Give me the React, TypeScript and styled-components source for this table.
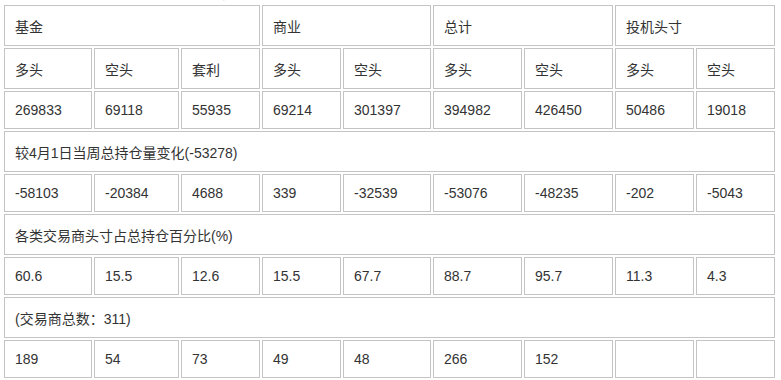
import React from 'react';
import styled, { createGlobalStyle } from 'styled-components';

const GlobalStyle = createGlobalStyle`
  body {
    margin: 0;
    background: #fff;
    font-family: "Liberation Sans", Arial, "Noto Sans CJK SC", sans-serif;
    color: #333;
  }
`;

const Page = styled.div`
  padding: 0 2px;
`;

// only the last pixels of the caption line are visible in the shot
const Caption = styled.p`
  margin: -17px 0 0;
  height: 20px;
  font-size: 14px;
  line-height: 20px;
  color: #333;
`;

const Grid = styled.div`
  display: grid;
  grid-template-columns: 88px 85px 79px 79px 88px 89px 89px 79px 79px;
  grid-template-rows: 41px 41px 38px 41px 38px 41px 38px 41px 38px;
  gap: 2px;
  padding: 2px;
  width: 775px;
  box-sizing: border-box;
`;

const Cell = styled.div<{ $span?: number }>`
  grid-column: span ${(p) => p.$span ?? 1};
  display: flex;
  align-items: center;
  padding: 0 10px;
  border: 1px solid #c4c4c4;
  font-size: 14px;
  white-space: nowrap;
  overflow: hidden;
`;

type CellData = { text: string; span?: number };

const rows: CellData[][] = [
  [
    { text: '基金', span: 3 },
    { text: '商业', span: 2 },
    { text: '总计', span: 2 },
    { text: '投机头寸', span: 2 },
  ],
  ['多头', '空头', '套利', '多头', '空头', '多头', '空头', '多头', '空头'].map((t) => ({ text: t })),
  ['269833', '69118', '55935', '69214', '301397', '394982', '426450', '50486', '19018'].map((t) => ({
    text: t,
  })),
  [{ text: '较4月1日当周总持仓量变化(-53278)', span: 9 }],
  ['-58103', '-20384', '4688', '339', '-32539', '-53076', '-48235', '-202', '-5043'].map((t) => ({
    text: t,
  })),
  [{ text: '各类交易商头寸占总持仓百分比(%)', span: 9 }],
  ['60.6', '15.5', '12.6', '15.5', '67.7', '88.7', '95.7', '11.3', '4.3'].map((t) => ({ text: t })),
  [{ text: '(交易商总数：311)', span: 9 }],
  ['189', '54', '73', '49', '48', '266', '152', '', ''].map((t) => ({ text: t })),
];

const App = () => {
  return (
    <Page>
      <GlobalStyle />
      <Caption>CFTC黄金期货持仓报告（单位：手，截至4月8日当周）</Caption>
      <Grid>
        {rows.map((row, i) =>
          row.map((cell, j) => (
            <Cell key={`${i}-${j}`} $span={cell.span}>
              {cell.text}
            </Cell>
          ))
        )}
      </Grid>
    </Page>
  );
};

export default App;
